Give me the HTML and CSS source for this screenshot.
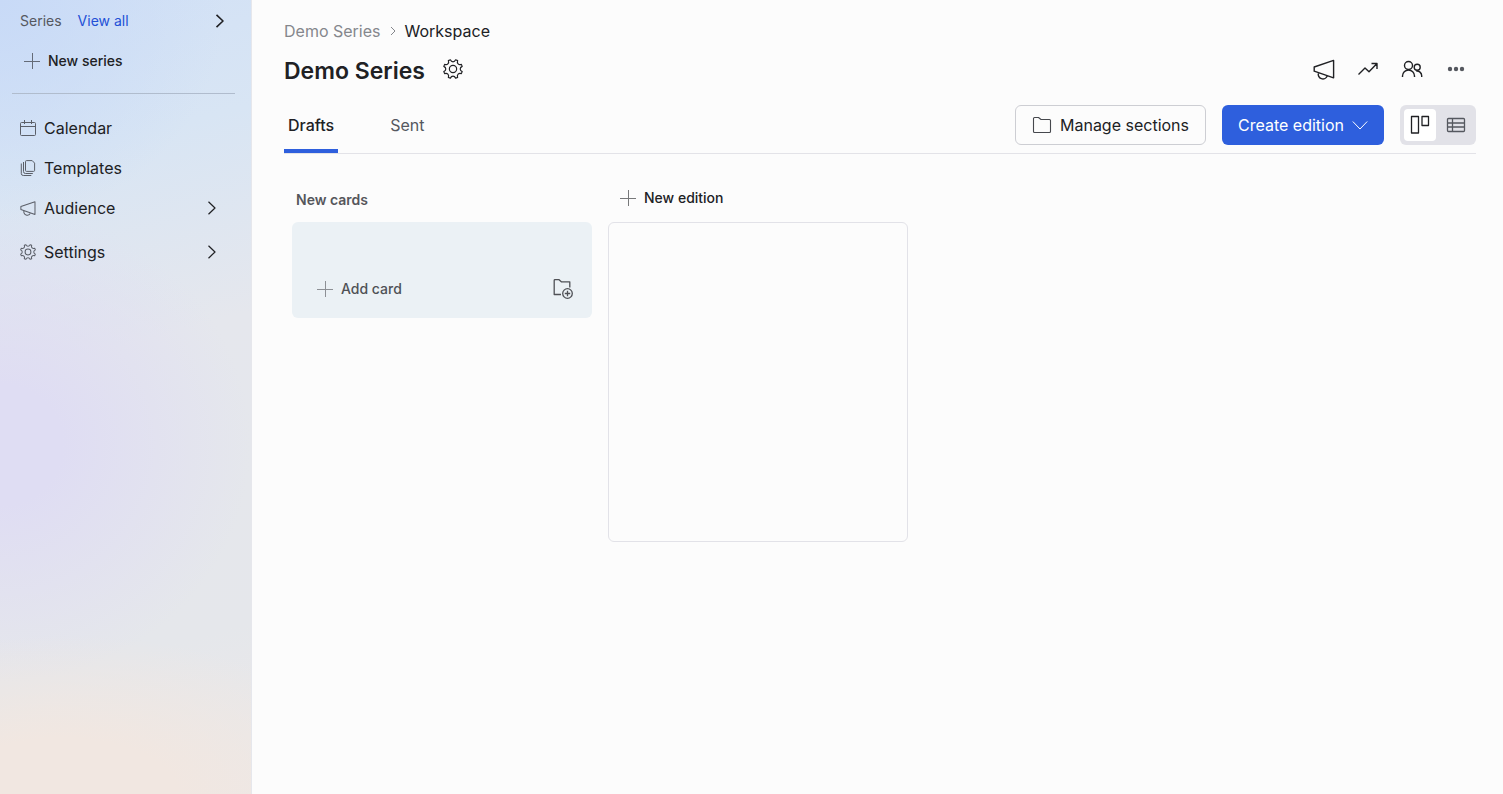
FILE: index.html
```html
<!DOCTYPE html>
<html lang="en">
<head>
<meta charset="utf-8">
<title>Demo Series – Workspace</title>
<meta name="viewport" content="width=device-width, initial-scale=1">
<link rel="stylesheet" href="styles.css">
</head>
<body>
<svg class="sprite" aria-hidden="true">
  <symbol id="i-plus" viewBox="0 0 16 16"><path d="M8.5 0v16M0 8.5h16"/></symbol>
  <symbol id="i-chevron" viewBox="0 0 10 16"><path d="M1.500 1.800 8 8l-6.500 6.200"/></symbol>
  <symbol id="i-gear" viewBox="-11 -11 22 22"><path d="M-2.900-10.100C-1.600-7.200 1.600-7.200 2.900-10.100L5.100-9.200C4-6.200 6.200-4 9.200-5.100L10.100-2.900C7.200-1.600 7.200 1.600 10.100 2.900L9.200 5.100C6.200 4 4 6.200 5.100 9.200L2.900 10.100C1.600 7.200-1.600 7.200-2.900 10.100L-5.100 9.200C-4 6.200-6.200 4-9.200 5.100L-10.100 2.900C-7.200 1.600-7.200-1.600-10.100-2.900L-9.200-5.100C-6.200-4-4-6.200-5.100-9.200Z"/><circle r="4"/></symbol>
  <symbol id="i-horn" viewBox="0 0 22 20"><path d="M1.200 8v4.200L20.600 18.800V1.400L1.200 8ZM5.500 13.800a4.500 4.500 0 0 0 8.800 3"/></symbol>
</svg>
<div class="app">
  <aside class="sidebar">
    <div class="series-bar">
      <span>Series</span>
      <a href="#all">View all</a>
      <button class="collapse" type="button" aria-label="Collapse"><svg class="icon chevron strong"><use href="#i-chevron"/></svg></button>
    </div>
    <button class="new-series" type="button"><svg class="icon plus"><use href="#i-plus"/></svg>New series</button>
    <hr class="divider">
    <nav class="nav">
      <a class="nav-item" href="#calendar"><svg class="icon small" viewBox="0 0 16 16"><path d="M1.500 2.500h13a1 1 0 0 1 1 1v11a1 1 0 0 1-1 1h-13a1 1 0 0 1-1-1v-11a1 1 0 0 1 1-1ZM.5 6.500h15M4.500 0v4M11.500 0v4"/></svg>Calendar</a>
      <a class="nav-item" href="#templates"><svg class="icon small" viewBox="0 0 16 16"><path d="M6.500.6h5.700l2.400 2.500v7.300a1 1 0 0 1-1 1H6.500a1 1 0 0 1-1-1V1.600a1 1 0 0 1 1-1ZM3.500 2v9.500a2 2 0 0 0 2 2h7.300M1.300 3.500v10a2 2 0 0 0 2 2h8"/></svg>Templates</a>
      <div class="nav-group">
        <a class="nav-item" href="#audience"><svg class="icon small scaled"><use href="#i-horn"/></svg><span>Audience</span><svg class="icon chevron"><use href="#i-chevron"/></svg></a>
        <a class="nav-item" href="#settings"><svg class="icon small scaled"><use href="#i-gear"/></svg><span>Settings</span><svg class="icon chevron"><use href="#i-chevron"/></svg></a>
      </div>
    </nav>
  </aside>

  <main class="main">
    <nav class="crumbs" aria-label="Breadcrumb">
      <a href="#series">Demo Series</a>
      <svg class="crumb-sep" viewBox="0 0 8 10"><path d="M2 1l4 4-4 4"/></svg>
      <span>Workspace</span>
    </nav>
    <header class="heading">
      <h1>Demo Series</h1>
      <button class="icon-btn" type="button" aria-label="Series settings"><svg class="icon"><use href="#i-gear"/></svg></button>
      <div class="tools">
        <button class="icon-btn" type="button" aria-label="Announce"><svg class="icon large"><use href="#i-horn"/></svg></button>
        <button class="icon-btn" type="button" aria-label="Insights"><svg class="icon large" viewBox="0 0 22 22"><path d="M1.500 16.500 8 10l4 3.700L20 5.500M14.500 5.500H20V11"/></svg></button>
        <button class="icon-btn" type="button" aria-label="Members"><svg class="icon large" viewBox="0 0 22 22"><circle cx="7.500" cy="7.500" r="4"/><path d="M1.500 19v-1a6 6 0 0 1 12 0v1M15.200 13a4.800 4.800 0 0 1 5.500 4.700V19"/><circle cx="16.200" cy="9.200" r="3"/></svg></button>
        <button class="icon-btn" type="button" aria-label="More"><svg class="dots" viewBox="0 0 22 22"><circle cx="5" cy="11" r="2.200"/><circle cx="11" cy="11" r="2.200"/><circle cx="17" cy="11" r="2.200"/></svg></button>
      </div>
    </header>
    <div class="tabbar">
      <div class="tabs" role="tablist">
        <button class="tab active" type="button" role="tab" aria-selected="true">Drafts</button>
        <button class="tab" type="button" role="tab" aria-selected="false">Sent</button>
      </div>
      <div class="actions">
        <button class="btn" type="button"><svg class="icon folder" viewBox="0 0 20 18"><path d="M2.500 1.500h4l2.500 2h8.500a1 1 0 0 1 1 1v11a1 1 0 0 1-1 1h-15a1 1 0 0 1-1-1v-13a1 1 0 0 1 1-1Z"/></svg>Manage sections</button>
        <button class="btn primary" type="button">Create edition<svg class="icon small" viewBox="0 0 16 16"><path d="M.8 4.500 8 12l7.200-7.500"/></svg></button>
        <div class="switch" role="group" aria-label="View">
          <button class="view on" type="button" aria-label="Board view" aria-pressed="true"><svg class="icon" viewBox="0 0 20 20"><path d="M1.500 1.500h7v16.500h-7zM12 1.500h6.500v9H12z"/></svg></button>
          <button class="view" type="button" aria-label="Table view" aria-pressed="false"><svg class="icon" viewBox="0 0 20 20"><path d="M2.500 3.500h15a1 1 0 0 1 1 1v11a1 1 0 0 1-1 1h-15a1 1 0 0 1-1-1v-11a1 1 0 0 1 1-1ZM1.500 8h17M1.500 12h17M6.500 3.500v13"/></svg></button>
        </div>
      </div>
    </div>
    <div class="board">
      <section class="column">
        <h2>New cards</h2>
        <div class="drop">
          <button class="add-card" type="button"><svg class="icon plus"><use href="#i-plus"/></svg>Add card</button>
          <button class="add-section" type="button" aria-label="Add section"><svg class="icon" viewBox="0 0 20 20"><path d="M8 15.500H1.200V1.500a1 1 0 0 1 1-1h3.600l2.500 2.300h8.500v5.700"/><circle cx="14.500" cy="14.500" r="4.800"/><path d="M14.500 11.800v5.400M11.800 14.500h5.400"/></svg></button>
        </div>
      </section>
      <section class="column">
        <button class="new-edition" type="button"><svg class="icon plus"><use href="#i-plus"/></svg>New edition</button>
        <div class="slot"></div>
      </section>
    </div>
  </main>
</div>
</body>
</html>
```
FILE: styles.css
```css
* { box-sizing: border-box; }
body {
  margin: 0;
  background: #fcfcfc;
  color: #202124;
  font: 16px/20px Inter, "Liberation Sans", sans-serif;
}
button {
  padding: 0;
  border: 0;
  background: none;
  color: inherit;
  font: inherit;
  cursor: pointer;
}
a { color: inherit; text-decoration: none; }
h1, h2 { margin: 0; }

.sprite { position: absolute; width: 0; height: 0; }
.icon {
  flex: none;
  width: 20px;
  height: 20px;
  fill: none;
  stroke: currentColor;
  stroke-width: 1.3;
  stroke-linejoin: round;
}
.icon.small { width: 16px; height: 16px; stroke-width: 1; }
.icon.scaled { stroke-width: 1.4; }
.icon.large { width: 22px; height: 22px; stroke-width: 1.4; }
.icon.plus { width: 16px; height: 16px; stroke-width: 1; opacity: .6; }
.icon.chevron { width: 10px; height: 16px; stroke-width: 1.2; }
.icon.strong { stroke-width: 1.6; }

.app { display: flex; min-height: 100vh; }

.sidebar {
  flex: 0 0 252px;
  padding: 11px 16px 0 12px;
  border-right: 1px solid #e6e7ec;
  background:
    radial-gradient(ellipse 130% 20% at 25% 100%, #f1e7e1 35%, rgba(241, 231, 225, 0) 100%),
    radial-gradient(ellipse 100% 30% at 0% 56%, #dfddf3 25%, rgba(223, 221, 243, 0) 100%),
    radial-gradient(ellipse 90% 28% at 0% 0%, #c8daf7 0%, rgba(200, 218, 247, 0) 100%),
    linear-gradient(165deg, #d2e1f6 0%, #d8e5f4 20%, #e5e7ed 44%, #e5e7eb 80%, #ebe8e8 100%);
}
.series-bar {
  display: flex;
  align-items: center;
  gap: 16px;
  padding: 0 10px 0 8px;
  color: #55585f;
  font-size: 14px;
}
.series-bar a { color: #2350d6; }
.collapse { display: flex; margin-left: auto; color: #202124; }
.new-series {
  display: flex;
  align-items: center;
  gap: 8px;
  height: 32px;
  margin-top: 14px;
  padding: 0 12px;
  font-size: 14px;
  font-weight: 500;
}
.divider {
  height: 1px;
  margin: 16px 0 14px;
  border: 0;
  background: #b0bccd;
}
.nav-group { display: grid; gap: 4px; }
.nav-item {
  display: flex;
  align-items: center;
  gap: 8px;
  height: 40px;
  padding: 0 18px 0 8px;
}
.nav-item .small { color: #5b5f68; }
.nav-item .chevron { margin-left: auto; }

.main { flex: 1; min-width: 0; padding: 21px 27px 0 32px; }
.crumbs { display: flex; align-items: center; gap: 8px; }
.crumbs a { color: #85878c; }
.crumb-sep {
  width: 8px;
  height: 10px;
  fill: none;
  stroke: #85878c;
}
.heading {
  display: flex;
  align-items: center;
  gap: 12px;
  height: 32px;
  margin: 12px 0 20px;
}
h1 { padding-top: 4px; font-size: 23px; font-weight: 600; line-height: 28px; }
.icon-btn {
  display: grid;
  place-items: center;
  width: 32px;
  height: 32px;
}
.tools { display: flex; gap: 12px; margin-left: auto; margin-right: 4px; }
.dots { width: 22px; height: 22px; fill: #55585f; }

.tabbar {
  display: flex;
  justify-content: space-between;
  align-items: flex-start;
  border-bottom: 1px solid #e3e3e8;
}
.tabs { display: flex; gap: 48px; }
.tab {
  height: 48px;
  padding: 0 4px 4px;
  border-bottom: 4px solid transparent;
  color: #55585f;
}
.tab.active { border-color: #2e5fdd; color: #202124; font-weight: 500; }
.actions { display: flex; gap: 16px; }
.btn {
  display: flex;
  align-items: center;
  gap: 8px;
  height: 40px;
  padding: 0 16px;
  border: 1px solid #cdced3;
  border-radius: 6px;
}
.btn .folder { height: 18px; color: #46484d; stroke-width: 1.1; }
.btn.primary { border: 0; background: #2e5fdd; color: #fff; }
.switch {
  display: flex;
  gap: 4px;
  padding: 4px;
  border-radius: 6px;
  background: #e2e2e8;
}
.view {
  display: grid;
  place-items: center;
  width: 32px;
  height: 32px;
  border-radius: 4px;
  color: #55585f;
}
.view.on { background: #fff; color: #202124; }

.board { display: flex; gap: 16px; padding: 24px 8px; }
.column { flex: 0 0 300px; }
h2 {
  padding-left: 4px;
  color: #55565b;
  font-size: 14px;
  font-weight: 600;
  line-height: 44px;
}
.drop {
  display: flex;
  justify-content: space-between;
  align-items: flex-end;
  min-height: 96px;
  padding: 8px 19px 8px 25px;
  border-radius: 6px;
  background: #ebf1f5;
  color: #4f5156;
}
.add-card, .add-section { display: flex; align-items: center; height: 42px; }
.add-card { gap: 8px; font-size: 14px; font-weight: 500; }
.new-edition {
  display: flex;
  align-items: center;
  gap: 8px;
  height: 40px;
  margin-bottom: 4px;
  padding: 0 12px;
  font-size: 14px;
  font-weight: 500;
}
.slot { min-height: 320px; border: 1px solid #e2e2e8; border-radius: 6px; }
```
